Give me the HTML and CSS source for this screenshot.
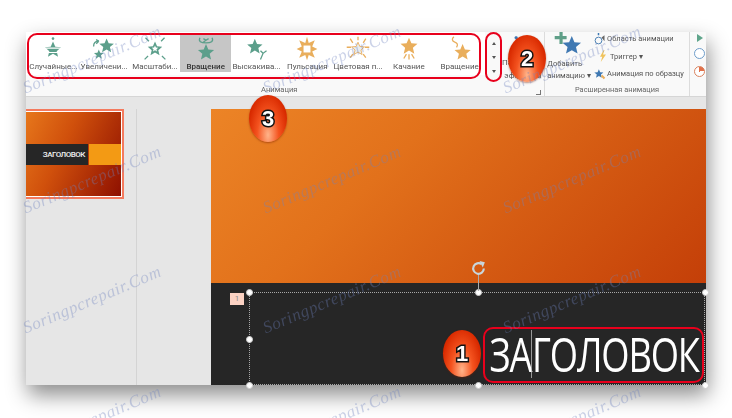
FILE: index.html
```html
<!DOCTYPE html>
<html lang="en">

<head>
  <meta charset="UTF-8" />
  <title>Анимация</title>
  <link rel="stylesheet" href="styles.css">
</head>

<body>
  <svg class="defs" width="0" height="0">
    <symbol id="star" viewBox="0 0 24 24">
      <path d="M12 1l3.2 7.4 8 .7-6.1 5.3 1.900 7.900L12 18.100l-7 4.200 1.900-7.900L.8 9.100l8-.7z" />
    </symbol>
  </svg>

  <div class="window">
    <div class="ribbon">
      <div class="gallery">
        <div class="anim">
          <svg class="ico green" viewBox="0 0 30 30"><use href="#star" x="5" y="5" width="20" height="21" /><path class="cut" d="M3 14h24M5 19h20" /><circle cx="15" cy="3" r="1.500" /></svg>
          <span>Случайные...</span>
        </div>
        <div class="anim">
          <svg class="ico green" viewBox="0 0 30 30"><use href="#star" x="9" y="1" width="18" height="20" /><use href="#star" x="3" y="15" width="12" height="12" /><path class="line" d="M3 12c0-4 2-6 6-6M9 6L6 4M9 6L6 9" /></svg>
          <span>Увеличени...</span>
        </div>
        <div class="anim">
          <svg class="ico green" viewBox="0 0 30 30"><use href="#star" x="6" y="4" width="18" height="21" /><use class="inner" href="#star" x="11" y="10" width="8" height="9" /><path class="line" d="M4 2l4 4M26 2l-4 4M3 27l4-4M27 27l-4-4" /></svg>
          <span>Масштаби...</span>
        </div>
        <div class="anim selected">
          <svg class="ico green" viewBox="0 0 30 30"><use href="#star" x="5" y="8" width="20" height="21" /><path class="line" d="M8 2c-2 4 1 6 7 6s9-2 7-6M12 3l3 2-3 2M18 3l-3 2" /></svg>
          <span>Вращение</span>
        </div>
        <div class="anim">
          <svg class="ico green" viewBox="0 0 30 30"><use href="#star" x="3" y="2" width="19" height="20" /><path class="line" d="M19 27l3-7 4-3M22 20l-3-3" /></svg>
          <span>Выскакива...</span>
        </div>
        <div class="anim">
          <svg class="ico orange" viewBox="0 0 30 30"><path d="M15 1l2 7 7-3-3 7 6 3-6 3 3 7-7-3-2 6-2-6-7 3 3-7-6-3 6-3-3-7 7 3z" /><rect class="hole" x="11" y="11" width="8" height="8" /></svg>
          <span>Пульсация</span>
        </div>
        <div class="anim">
          <svg class="ico orange" viewBox="0 0 30 30"><use class="pale" href="#star" x="7" y="6" width="16" height="17" /><path class="line" d="M15 1v4M6 3l3 5M24 3l-3 5M2 13h5M28 13h-5M6 25l3-4M24 25l-3-4" /></svg>
          <span>Цветовая п...</span>
        </div>
        <div class="anim">
          <svg class="ico orange" viewBox="0 0 30 30"><use href="#star" x="4" y="1" width="22" height="21" /><path class="line" d="M9 26l3-5M15 27v-6M21 26l-3-5" /></svg>
          <span>Качание</span>
        </div>
        <div class="anim">
          <svg class="ico orange" viewBox="0 0 30 30"><use href="#star" x="8" y="8" width="20" height="21" /><path class="line" d="M8 1C5 3 6 6 9 7s4 3 2 6" /></svg>
          <span>Вращение</span>
        </div>
      </div>

      <div class="scroller">
        <i class="arrow up"></i>
        <i class="arrow down"></i>
        <i class="arrow more"></i>
      </div>

      <div class="effects">
        <svg class="effects-ico" viewBox="0 0 20 26"><circle cx="3" cy="4" r="2" /><path d="M7 4h10" /><circle cx="3" cy="12" r="2" /></svg>
        <span class="effects-text">Параметры<br>эффектов</span>
        <i class="launcher"></i>
      </div>

      <div class="group add-group">
        <div class="group-body">
          <div class="add">
            <svg class="add-ico" viewBox="0 0 36 34">
              <use href="#star" x="9" y="4" width="25" height="25" fill="#3f78b2" />
              <path d="M6 0h4v5h5v4h-5v6H6V9H0V5h6z" fill="#5f9f88" />
            </svg>
            <span>Добавить<br>анимацию ▾</span>
          </div>
          <ul class="tools">
            <li><svg class="tool-ico" viewBox="0 0 16 16"><circle cx="6" cy="10" r="4.500" fill="none" stroke="#4b7fb3" stroke-width="1.300" /><path d="M5 0h2v3H5z" fill="#3f78b2" /><path d="M10 6l4-3v8z" fill="#666" /></svg>Область анимации</li>
            <li><svg class="tool-ico" viewBox="0 0 16 16"><path d="M9 0L4 9h3l-2 7 7-10H8l2-6z" fill="#f0c35c" /></svg>Триггер ▾</li>
            <li><svg class="tool-ico" viewBox="0 0 16 16"><use href="#star" x="0" y="1" width="13" height="13" fill="#3f78b2" /><path d="M11 9l4 4-2 2-4-4z" fill="#e9ae5c" /></svg>Анимация по образцу</li>
          </ul>
        </div>
        <div class="group-label">Расширенная анимация</div>
      </div>

      <div class="timing">
        <i class="play"></i>
        <i class="clock"></i>
        <i class="clock delay"></i>
      </div>

      <div class="gallery-label">Анимация</div>
    </div>

    <div class="strip"></div>

    <div class="work">
      <aside class="thumbs">
        <div class="thumb">
          <div class="thumb-bar">
            <span class="thumb-title">ЗАГОЛОВОК</span>
            <span class="thumb-accent"></span>
          </div>
        </div>
      </aside>

      <div class="stage">
        <div class="slide">
          <div class="slide-top"></div>
          <div class="slide-band">
            <span class="tag">1</span>
            <div class="placeholder">
              <span class="title">ЗА<i class="caret"></i>ГОЛОВОК</span>
            </div>
            <i class="handle h-tl"></i>
            <i class="handle h-tc"></i>
            <i class="handle h-tr"></i>
            <i class="handle h-ml"></i>
            <i class="handle h-bl"></i>
            <i class="handle h-bc"></i>
            <i class="handle h-br"></i>
            <i class="rotate-line"></i>
            <svg class="rotate" viewBox="0 0 16 16"><path d="M13 8a5 5 0 1 1-2-4" /><path class="tip" d="M9 1l5 1-2 5z" /></svg>
          </div>
        </div>
      </div>
    </div>
  </div>

  <!-- red marks and numbers on top of the screenshot -->
  <i class="mark mark-gallery"></i>
  <i class="mark mark-scroll"></i>
  <i class="mark mark-title"></i>
  <span class="badge b1">1</span>
  <span class="badge b2">2</span>
  <span class="badge b3">3</span>

  <div class="watermarks">
    <span>Soringpcrepair.Com</span>
    <span>Soringpcrepair.Com</span>
    <span>Soringpcrepair.Com</span>
    <span>Soringpcrepair.Com</span>
    <span>Soringpcrepair.Com</span>
    <span>Soringpcrepair.Com</span>
    <span>Soringpcrepair.Com</span>
    <span>Soringpcrepair.Com</span>
    <span>Soringpcrepair.Com</span>
    <span>Soringpcrepair.Com</span>
    <span>Soringpcrepair.Com</span>
    <span>Soringpcrepair.Com</span>
  </div>
</body>

</html>
```

FILE: styles.css
```css
* {
  box-sizing: border-box;
}

html,
body {
  margin: 0;
  height: 100%;
  background: #fff;
  overflow: hidden;
  font-family: Roboto, sans-serif;
}

body {
  position: relative;
  padding: 32px 26px 33px;
}

i {
  display: block;
}

.defs {
  position: absolute;
}

.window {
  height: 353px;
  display: flex;
  flex-direction: column;
  background: #e6e6e6;
  box-shadow: 2px 10px 20px rgba(0, 0, 0, 0.45);
  filter: blur(0.35px);
}

/* ribbon */
.ribbon {
  position: relative;
  height: 65px;
  flex: none;
  display: flex;
  background: #f9f9f9;
  border-bottom: 1px solid #d6d6d6;
  color: #555;
  font-size: 8px;
}

.gallery {
  display: flex;
  width: 459px;
  height: 43px;
  padding: 3px 0 3px 2px;
  background: #fff;
}

.anim {
  width: 51px;
  display: flex;
  flex-direction: column;
  align-items: center;
  padding-top: 1px;
  white-space: nowrap;
}

.anim span {
  line-height: 10px;
}

.anim.selected {
  background: #c6c6c6;
  color: #333;
  font-weight: 500;
}

.ico {
  width: 26px;
  height: 26px;
  flex: none;
}

.ico.green {
  fill: #5c9f8b;
  color: #5c9f8b;
}

.ico.orange {
  fill: #e9ae5c;
  color: #e9ae5c;
}

.ico .line {
  fill: none;
  stroke: currentColor;
  stroke-width: 1.500;
}

.ico .cut {
  fill: none;
  stroke: #fff;
  stroke-width: 1.300;
}

.ico .inner,
.ico .hole {
  fill: #fff;
}

.ico .pale {
  fill: #e8edf0;
  stroke: #e9ae5c;
  stroke-width: 1.500;
}

.scroller {
  width: 17px;
  height: 50px;
  display: flex;
  flex-direction: column;
  justify-content: space-around;
  align-items: center;
  padding: 4px 0;
}

.arrow {
  width: 0;
  height: 0;
  border-left: 2.500px solid transparent;
  border-right: 2.500px solid transparent;
}

.arrow.up {
  border-bottom: 3px solid #555;
}

.arrow.down {
  border-top: 3px solid #555;
}

.arrow.more {
  border-top: 3px solid #555;
  box-shadow: 0 -3px 0 -2px #555;
}

.effects {
  position: relative;
  width: 43px;
  border-right: 1px solid #dcdcdc;
  padding: 3px 0 0 9px;
}

.effects-ico {
  display: block;
  width: 20px;
  height: 18px;
  margin-bottom: 3px;
  fill: #3f78b2;
  stroke: #3f78b2;
  stroke-width: 0.800;
}

.effects-text {
  display: block;
  margin-left: -9px;
  text-align: center;
  line-height: 13px;
  white-space: nowrap;
  overflow: hidden;
}

.launcher {
  position: absolute;
  right: 3px;
  bottom: 1px;
  width: 5px;
  height: 5px;
  border-right: 1px solid #777;
  border-bottom: 1px solid #777;
}

.group {
  width: 145px;
  display: flex;
  flex-direction: column;
  border-right: 1px solid #dcdcdc;
}

.group-body {
  flex: 1;
  display: flex;
}

.group-label {
  text-align: center;
  font-size: 7.400px;
  line-height: 12px;
  color: #666;
}

.add {
  width: 48px;
  display: flex;
  flex-direction: column;
  align-items: center;
  font-size: 7.600px;
  line-height: 12px;
  white-space: nowrap;
}

.add-ico {
  width: 30px;
  height: 27px;
  flex: none;
  margin-bottom: -1px;
}

.tools {
  list-style: none;
  margin: -2px 0 0;
  padding: 0 0 0 1px;
  font-size: 7.500px;
  white-space: nowrap;
}

.tools li {
  display: flex;
  align-items: center;
  height: 17.500px;
  gap: 1px;
}

.tools li:nth-child(2) {
  padding-left: 3px;
}

.tool-ico {
  width: 12px;
  height: 12px;
  flex: none;
}

.timing {
  flex: 1;
  display: flex;
  flex-direction: column;
  gap: 6.500px;
  padding: 1.500px 0 0 4px;
}

.play {
  width: 0;
  height: 0;
  margin-left: 3px;
  border-left: 6px solid #5fa58b;
  border-top: 4.500px solid transparent;
  border-bottom: 4.500px solid transparent;
}

.clock {
  width: 11px;
  height: 11px;
  border: 1px solid #6d9cc9;
  border-radius: 50%;
  background: #fff;
}

.clock.delay {
  background: conic-gradient(#e2704a 0 25%, #fff 25% 100%);
  border-color: #d9825e;
}

.gallery-label {
  position: absolute;
  left: 235px;
  bottom: 0;
  font-size: 7.600px;
  line-height: 12px;
  color: #666;
}

.strip {
  height: 12px;
  flex: none;
}

/* slide area */
.work {
  flex: 1;
  display: flex;
  min-height: 0;
}

.thumbs {
  width: 111px;
  flex: none;
  border-right: 1px solid #d4d4d4;
  overflow: hidden;
}

.thumb {
  width: 102px;
  height: 90px;
  margin-left: -4px;
  display: flex;
  align-items: center;
  border: 2px solid #f47a5e;
  outline: 1px solid #fff;
  outline-offset: -3px;
  background: linear-gradient(115deg, #e8791c 0%, #d0500c 40%, #8d0f00 100%);
}

.thumb-bar {
  width: 100%;
  height: 21px;
  display: flex;
  gap: 1px;
  margin-right: 1px;
}

.thumb-title {
  flex: 1;
  background: #262626;
  color: #eee;
  font-size: 8px;
  font-weight: 500;
  line-height: 21px;
  text-align: right;
  padding-right: 3px;
  letter-spacing: -0.5px;
}

.thumb-accent {
  width: 32px;
  background: #f39a14;
}

.stage {
  flex: 1;
  padding-left: 74px;
  min-width: 0;
}

.slide {
  height: 100%;
  display: flex;
  flex-direction: column;
}

.slide-top {
  height: 174px;
  flex: none;
  background: linear-gradient(135deg, #ec8426 0%, #e2711b 35%, #c43f08 100%);
}

.slide-band {
  position: relative;
  flex: 1;
  background: #262626;
}

.tag {
  position: absolute;
  left: 19px;
  top: 10px;
  width: 14px;
  height: 12px;
  background: #fbd2c3;
  color: #8b8b8b;
  font-size: 8px;
  line-height: 12px;
  text-align: center;
}

.placeholder {
  position: absolute;
  left: 38px;
  top: 9px;
  right: 1px;
  bottom: 0;
  border: 1px dotted #a8a8a8;
  display: flex;
  align-items: flex-end;
  justify-content: flex-end;
}

.title {
  display: flex;
  color: #fff;
  font-size: 47px;
  line-height: 60px;
  font-family: "Open Sans", sans-serif;
  letter-spacing: -1.500px;
  margin-right: 5px;
  white-space: nowrap;
  transform: scaleX(0.773);
  transform-origin: right center;
}

.caret {
  width: 1px;
  height: 48px;
  margin-top: 6px;
  background: #bbb;
}

.handle {
  position: absolute;
  width: 7px;
  height: 7px;
  border-radius: 50%;
  background: #fff;
  border: 1px solid #ccc;
}

.h-tl { left: 35px; top: 6px; }
.h-tc { left: 264px; top: 6px; }
.h-tr { left: 491px; top: 6px; }
.h-ml { left: 35px; top: 53px; }
.h-bl { left: 35px; top: 99px; }
.h-bc { left: 264px; top: 99px; }
.h-br { left: 491px; top: 99px; }

.rotate-line {
  position: absolute;
  left: 267px;
  top: -9px;
  width: 1px;
  height: 17px;
  background: #aaa;
}

.rotate {
  position: absolute;
  left: 259px;
  top: -23px;
  width: 17px;
  height: 17px;
  fill: none;
  stroke: #c9d6dc;
  stroke-width: 2;
}

.rotate .tip {
  fill: #c9d6dc;
  stroke: none;
}

/* marks */
.mark {
  position: absolute;
  border: 2.500px solid #e8001c;
  border-radius: 10px;
}

.mark-gallery {
  left: 27px;
  top: 33px;
  width: 454px;
  height: 46px;
}

.mark-scroll {
  left: 485px;
  top: 32px;
  width: 17px;
  height: 50px;
}

.mark-title {
  left: 483px;
  top: 327px;
  width: 221px;
  height: 56px;
}

.badge {
  position: absolute;
  width: 38px;
  height: 47px;
  border-radius: 50%;
  background: radial-gradient(ellipse at 50% 85%, #ffb48a 0%, #f4531f 40%, #d92a00 75%, #b52000 100%);
  box-shadow: 0 1px 2px rgba(120, 30, 0, 0.5);
  color: #fff;
  font: bold 22px/47px "Liberation Sans", sans-serif;
  text-align: center;
  -webkit-text-stroke: 3px #111;
  paint-order: stroke fill;
}

.b1 { left: 443px; top: 330px; }
.b2 { left: 508px; top: 35px; }
.b3 { left: 249px; top: 95px; }

/* watermark repeats over the whole picture */
.watermarks {
  position: absolute;
  left: -28px;
  top: 0;
  width: 760px;
  height: 418px;
  overflow: hidden;
  display: grid;
  grid-template-columns: repeat(3, 240px);
  grid-auto-rows: 120px;
  place-items: center;
  pointer-events: none;
}

.watermarks span {
  color: rgba(112, 130, 190, 0.36);
  font: italic 17px "Liberation Serif", serif;
  letter-spacing: 0.6px;
  transform: rotate(-23deg);
  white-space: nowrap;
}
```
